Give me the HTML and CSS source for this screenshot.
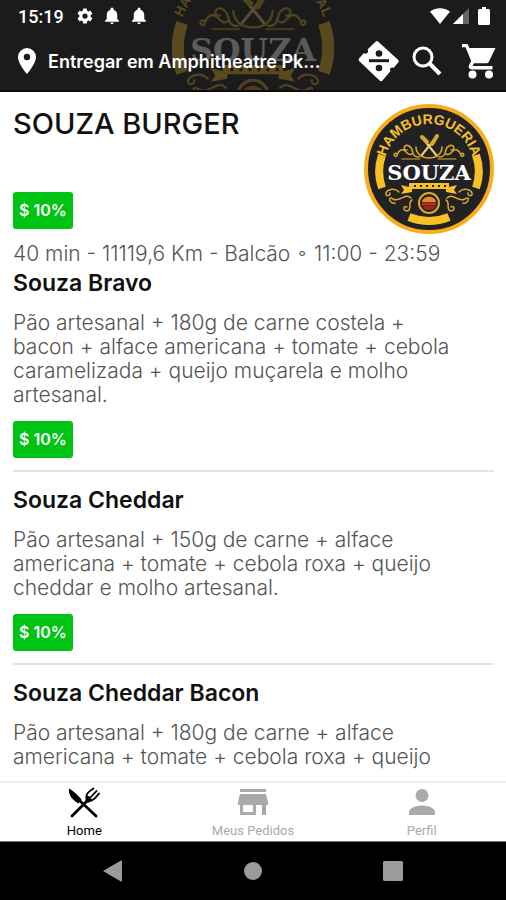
FILE: index.html
```html
<!DOCTYPE html>
<html lang="pt-BR">
<head>
    <meta charset="UTF-8">
    <meta name="viewport" content="width=device-width, initial-scale=1.0">
    <title>Souza Burger</title>
    <link rel="stylesheet" href="styles.css">
</head>
<body>
    <div class="app">
        <header class="header">
            <svg class="watermark" viewBox="0 0 130 130" aria-hidden="true">
                <path id="arcWide" d="M15 65 A50 50 0 0 1 115 65" fill="none"/>
                <text class="logo-arc-small"><textPath href="#arcWide" startOffset="50%">HAMBURGUERIA ORIGINAL</textPath></text>
                <use href="#emblem"/>
            </svg>

            <div class="status-bar">
                <span class="clock">15:19</span>
                <svg width="18" height="18" viewBox="0 0 24 24" fill="#fff"><path d="M19.4 13a7.500 7.500 0 0 0 0-2l2.100-1.600a.5.5 0 0 0 .1-.7l-2-3.400a.5.5 0 0 0-.6-.2l-2.500 1a7 7 0 0 0-1.700-1l-.4-2.600a.5.5 0 0 0-.5-.5h-4a.5.5 0 0 0-.5.5L9 5.100a7 7 0 0 0-1.700 1l-2.500-1a.5.5 0 0 0-.6.2l-2 3.400c-.1.2 0 .5.1.7L4.500 11a7.500 7.500 0 0 0 0 2l-2.200 1.600c-.1.2-.2.5-.1.7l2 3.400c.1.2.4.3.6.2l2.500-1a7 7 0 0 0 1.700 1l.4 2.600c0 .3.2.5.5.5h4c.3 0 .5-.2.5-.5l.4-2.600a7 7 0 0 0 1.700-1l2.500 1c.2.1.5 0 .6-.2l2-3.400a.5.5 0 0 0-.1-.7zM12 15.500a3.500 3.500 0 1 1 0-7 3.500 3.500 0 0 1 0 7z"/></svg>
                <svg width="18" height="18" viewBox="0 0 24 24" fill="#fff"><path d="M12 23c1.200 0 2.200-1 2.200-2.200H9.800C9.800 22 10.800 23 12 23zm7-7v-5.500c0-3.400-1.800-6.200-5-7v-.8a2 2 0 0 0-4 0v.8c-3.200.8-5 3.600-5 7V16l-2.300 2.300v1.200h18.600v-1.200z"/></svg>
                <svg width="18" height="18" viewBox="0 0 24 24" fill="#fff"><path d="M12 23c1.200 0 2.200-1 2.200-2.200H9.800C9.800 22 10.800 23 12 23zm7-7v-5.500c0-3.400-1.800-6.200-5-7v-.8a2 2 0 0 0-4 0v.8c-3.200.8-5 3.600-5 7V16l-2.300 2.300v1.200h18.600v-1.200z"/></svg>
                <div class="signals">
                    <svg width="20" height="16" viewBox="0 0 20 16" fill="#fff"><path d="M0 3.500C6-1 14-1 20 3.500L10 16z"/></svg>
                    <svg width="16" height="16" viewBox="0 0 16 16"><path d="M0 16L16 0v16z" fill="#666"/><path d="M0 16L10 6v10z" fill="#fff"/></svg>
                    <svg class="battery" width="12" height="18" viewBox="0 0 12 18" fill="#fff"><path d="M4 0h4v2h2.500c.8 0 1.500.7 1.500 1.500v13c0 .8-.7 1.500-1.500 1.500h-9C.7 18 0 17.300 0 16.500v-13C0 2.700.7 2 1.500 2H4z"/></svg>
                </div>
            </div>

            <div class="top-bar">
                <a class="address" href="#">
                    <svg width="18" height="26" viewBox="0 0 18 26" fill="#fff"><path d="M9 0a9 9 0 0 0-9 9c0 6.700 9 17 9 17s9-10.300 9-17a9 9 0 0 0-9-9zm0 12.200a3.200 3.200 0 1 1 0-6.400 3.200 3.200 0 0 1 0 6.400z"/></svg>
                    <span>Entregar em Amphitheatre Pk...</span>
                </a>
                <button class="icon-btn" aria-label="Cupons">
                    <svg width="42" height="42" viewBox="0 0 42 42"><path fill="#fff" d="M17.500 1.800a2 2 0 0 1 2.800 0L40 19.700c.9.800.9 2 .2 2.900L35.500 28c-2-1.500-4.500.8-3 3L24.500 40.500c-.8.900-2 .9-2.900.1L1.300 21.200c-.8-.8-.9-2-.1-2.900L6 13c2.500 2 5.500-1 3.500-3.500z"/><circle cx="21" cy="13.500" r="3.300" fill="#1b1b1b"/><circle cx="21" cy="28" r="3.300" fill="#1b1b1b"/><path d="M11 20.700h20" stroke="#1b1b1b" stroke-width="3"/></svg>
                </button>
                <button class="icon-btn" aria-label="Buscar">
                    <svg width="30" height="30" viewBox="0 0 30 30" fill="none" stroke="#fff"><circle cx="11" cy="11" r="9" stroke-width="3"/><path d="M17.500 17.500L28 28" stroke-width="4"/></svg>
                </button>
                <button class="icon-btn" aria-label="Carrinho">
                    <svg width="34" height="35" viewBox="0 0 34 35"><path d="M0 0h5.500l2 4H33.500L27 17.500c-.5 1.200-1.500 1.800-2.800 1.800H12L10.500 22h20v3.500H10c-3 0-4-2.600-2.800-4.700l2-3.800L3.500 3.300H0z" fill="#fff"/><circle cx="10.500" cy="30.500" r="4" fill="#fff"/><circle cx="27" cy="30.500" r="4" fill="#fff"/></svg>
                </button>
            </div>
        </header>

        <main class="content">
            <section class="store">
                <div class="store-info">
                    <h1>SOUZA BURGER</h1>
                    <span class="badge">$ 10%</span>
                </div>
                <svg class="logo" viewBox="0 0 130 130" role="img" aria-label="Hamburgueria Souza">
                    <circle cx="65" cy="65" r="63" fill="#222224" stroke="#f8ae1b" stroke-width="4"/>
                    <path id="arcTop" d="M20 65 A45 45 0 0 1 110 65" fill="none"/>
                    <text class="logo-arc"><textPath href="#arcTop" startOffset="50%">HAMBURGUERIA</textPath></text>
                    <g id="emblem">
                        <!-- side and bottom bands -->
                        <g fill="none" stroke="#f6c026" stroke-width="8">
                            <path d="M18 51A50 50 0 0 0 18 84"/>
                            <path d="M112 51A50 50 0 0 1 112 84"/>
                            <path d="M45 113Q65 121 85 113"/>
                        </g>
                        <!-- fork, knife and flourishes -->
                        <g fill="none" stroke="#d9a928" stroke-width="1.500" stroke-linecap="round">
                            <path d="M60 36L73 52M70 36L57 52" stroke="#f0d27a" stroke-width="2"/>
                            <path d="M58 33l5 5M73 32l-5 8" stroke-width="4"/>
                            <path d="M52 43C52 50 58 54 65 54S78 50 78 43"/>
                            <path d="M38 55H56M74 55H92" stroke-width="1"/>
                            <path d="M55 53C46 53 51 45 45 42C40 39 38 47 43 46M48 50C43 53 42 44 37 46C32 48 34 54 31 52C29 51 31 48 33 50"/>
                            <path d="M75 53C84 53 79 45 85 42C90 39 92 47 87 46M82 50C87 53 88 44 93 46C98 48 96 54 99 52C101 51 99 48 97 50"/>
                            <path d="M35 88C30 83 23 86 22 89C21 93 27 92 26 89M47 94C41 88 36 99 29 95C23 91 26 101 31 99M48 96C43 99 49 106 43 107C38 107 40 101 43 103"/>
                            <path d="M95 88C100 83 107 86 108 89C109 93 103 92 104 89M83 94C89 88 94 99 101 95C107 91 104 101 99 99M82 96C87 99 81 106 87 107C92 107 90 101 87 103"/>
                        </g>
                        <text class="logo-name" x="65" y="76">SOUZA</text>
                        <!-- ribbon -->
                        <path d="M37 81L45 83V79H85V83L93 81L90 86L93 90L82 88V85H48V88L37 90L40 86z" fill="#f6c026"/>
                        <path d="M50 82H82" stroke="#222224" stroke-width="2" stroke-dasharray="2 4"/>
                        <!-- burger seal -->
                        <circle cx="65" cy="99" r="10" fill="#222224" stroke="#d9a928" stroke-width="2"/>
                        <path d="M58 98C59 91 71 91 72 98z" fill="#e58a2c"/>
                        <path d="M58 100H72" stroke="#c9291f" stroke-width="3"/>
                        <path d="M59 102H71C71 105 69 106 65 106S59 105 59 102z" fill="#8e2c17"/>
                    </g>
                </svg>
            </section>
            <p class="meta">40 min - 11119,6 Km - Balcão ◦ 11:00 - 23:59</p>

            <article class="item">
                <h2>Souza Bravo</h2>
                <p>Pão artesanal + 180g de carne costela +<br>bacon + alface americana + tomate + cebola<br>caramelizada + queijo muçarela e molho<br>artesanal.</p>
                <span class="badge">$ 10%</span>
            </article>
            <article class="item">
                <h2>Souza Cheddar</h2>
                <p>Pão artesanal + 150g de carne + alface<br>americana + tomate + cebola roxa + queijo<br>cheddar e molho artesanal.</p>
                <span class="badge">$ 10%</span>
            </article>
            <article class="item">
                <h2>Souza Cheddar Bacon</h2>
                <p>Pão artesanal + 180g de carne + alface<br>americana + tomate + cebola roxa + queijo</p>
            </article>
        </main>

        <nav class="tabs">
            <a class="tab active" href="#">
                <svg width="32" height="32" viewBox="0 0 32 32"><path d="M1 1.500C4 3 9 7 13.500 12.500L10.500 16.500C5 13 0 9 1 1.500z" fill="currentColor"/><path d="M12 14L28 29M4 29L20 13" stroke="currentColor" stroke-width="2.800" stroke-linecap="round"/><path d="M18.500 11C18 7 20 5 25.500 1.500M21 12L28.500 4M20 14C24 15 27 12 31 6.500" fill="none" stroke="currentColor" stroke-width="1.800" stroke-linecap="round"/><path d="M18 9l3 0 3 4-3 2.500-4 .5z" fill="currentColor"/></svg>
                <span>Home</span>
            </a>
            <a class="tab" href="#">
                <svg width="32" height="32" viewBox="0 0 32 32" fill="currentColor"><path d="M3 2h26v3H3zM3 7h26l2 8v3h-2v10h-4V18h-6v10H3V18H1v-3zM6 18v7h10v-7z"/></svg>
                <span>Meus Pedidos</span>
            </a>
            <a class="tab" href="#">
                <svg width="32" height="32" viewBox="0 0 32 32" fill="currentColor"><circle cx="16" cy="8.500" r="6.500"/><path d="M3 28v-3c0-4.500 8.500-6.500 13-6.500s13 2 13 6.500v3z"/></svg>
                <span>Perfil</span>
            </a>
        </nav>

        <div class="system-nav">
            <button aria-label="Voltar"><svg width="20" height="22" viewBox="0 0 20 22" fill="#9b9b9b"><path d="M0 11L17.500.8c.8-.5 1.500 0 1.500.8v18.800c0 .8-.7 1.300-1.500.8z"/></svg></button>
            <button aria-label="Início"><svg width="20" height="20" viewBox="0 0 20 20" fill="#9b9b9b"><circle cx="10" cy="10" r="9"/></svg></button>
            <button aria-label="Recentes"><svg width="20" height="20" viewBox="0 0 20 20" fill="#9b9b9b"><rect width="20" height="20" rx="1.500"/></svg></button>
        </div>
    </div>
</body>
</html>
```
FILE: styles.css
```css
* {
    box-sizing: border-box;
}
body {
    margin: 0;
    font-family: Inter, "Open Sans", sans-serif;
    color: #111;
    background: #fff;
}
h1, h2, p {
    margin: 0;
}
svg {
    display: block;
    flex-shrink: 0;
}
button {
    padding: 0;
    border: 0;
    background: none;
}
a {
    color: inherit;
    text-decoration: none;
}
.app {
    display: flex;
    flex-direction: column;
    height: 100vh;
}

/* header */
.header {
    position: relative;
    flex-shrink: 0;
    overflow: hidden;
    background: #1b1b1b;
    color: #fff;
    border-bottom: 2px solid #0c0c0c;
}
.watermark {
    position: absolute;
    left: 50%;
    top: -54px;
    width: 196px;
    margin-left: -98px;
    opacity: 0.28;
}
.status-bar, .top-bar {
    position: relative;
    display: flex;
    align-items: center;
}
.status-bar {
    height: 32px;
    padding: 0 16px 0 18px;
    gap: 9px;
}
.clock {
    margin-right: 3px;
    font: 500 18px Roboto, sans-serif;
}
.signals {
    display: flex;
    align-items: center;
    gap: 3px;
    margin-left: auto;
}
.battery {
    margin-left: 6px;
}
.top-bar {
    height: 58px;
    padding: 0 10px 0 18px;
}
.address {
    display: flex;
    align-items: center;
    gap: 12px;
    margin-right: auto;
    font-size: 18px;
    font-weight: 600;
    white-space: nowrap;
}
.icon-btn {
    margin-left: 12px;
}
.icon-btn:last-child {
    margin-left: 20px;
}

/* store */
.content {
    flex: 1;
    min-height: 0;
    overflow: hidden;
    padding: 12px 12px 0 13px;
}
.store {
    display: flex;
    justify-content: space-between;
}
.store-info {
    display: flex;
    flex-direction: column;
    justify-content: space-between;
    align-items: flex-start;
    padding: 4px 0 5px;
}
h1 {
    font-size: 29px;
    line-height: 32px;
    font-weight: 500;
}
.logo {
    width: 130px;
    height: 130px;
}
.logo-arc, .logo-arc-small {
    font-family: "Liberation Sans", sans-serif;
    font-weight: 700;
    font-size: 14px;
    fill: #f6c026;
    text-anchor: middle;
}
.logo-arc-small {
    font-size: 9px;
}
.logo-name {
    font-family: "DejaVu Serif", serif;
    font-weight: 700;
    font-size: 21px;
    fill: #fff;
    text-anchor: middle;
}
.badge {
    display: inline-block;
    padding: 0 6px;
    border-radius: 3px;
    background: #00c314;
    color: #fff;
    font-size: 16px;
    line-height: 37px;
    font-weight: 600;
    vertical-align: top;
}
.meta {
    margin: 8px 0 3px;
    font-size: 21px;
    line-height: 24px;
    font-weight: 300;
    color: #555;
    white-space: nowrap;
}

/* menu items */
.item {
    padding-bottom: 12px;
    margin-bottom: 14px;
    border-bottom: 2px solid #e4e4e4;
}
.item h2 {
    font-size: 23px;
    line-height: 28px;
    font-weight: 600;
}
.item p {
    margin: 14px 0;
    font-size: 21px;
    line-height: 24px;
    font-weight: 300;
    color: #555;
    white-space: nowrap;
}

/* bottom tabs */
.tabs {
    display: flex;
    flex-shrink: 0;
    height: 61px;
    border-top: 2px solid #eee;
    border-bottom: 1px solid #777;
    background: #fff;
}
.tab {
    flex: 1;
    display: flex;
    flex-direction: column;
    align-items: center;
    padding-top: 4px;
    color: #aaa;
    font-family: Roboto, sans-serif;
    font-size: 13px;
    line-height: 24px;
}
.tab.active {
    color: #000;
}
.system-nav {
    display: flex;
    flex-shrink: 0;
    justify-content: center;
    align-items: center;
    gap: 120px;
    height: 58px;
    background: #000;
}
```
